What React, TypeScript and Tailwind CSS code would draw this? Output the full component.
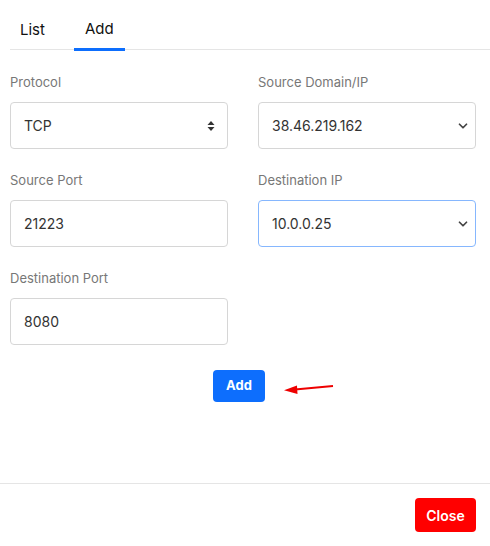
import { ChevronDown } from "lucide-react";

const font = { fontFamily: "Inter, 'Noto Sans', sans-serif" };

function Field({ label, children }: { label: string; children: React.ReactNode }) {
  return (
    <div className="flex flex-col">
      <label className="text-[13px] text-[#777] mb-[10px] leading-5">{label}</label>
      {children}
    </div>
  );
}

function TextBox({ value }: { value: string }) {
  return (
    <div className="h-[47px] rounded-[4px] border border-[#d6d6d6] bg-white px-[13px] flex items-center text-[14px] text-[#333]">
      {value}
    </div>
  );
}

function SelectBox({ value, focused, stepper }: { value: string; focused?: boolean; stepper?: boolean }) {
  return (
    <div
      className={`h-[47px] rounded-[4px] border bg-white pl-[13px] pr-[5px] flex items-center justify-between text-[14px] text-[#333] ${
        focused ? "border-[#86b7fe]" : "border-[#d6d6d6]"
      }`}
    >
      <span>{value}</span>
      {stepper ? (
        <svg width="10" height="12" viewBox="0 0 10 12" className="mr-[6px]">
          <path d="M5 1 L8.5 5 H1.5 Z" fill="#333" />
          <path d="M5 11 L8.5 7 H1.5 Z" fill="#333" />
        </svg>
      ) : (
        <ChevronDown size={14} strokeWidth={3} className="text-[#444]" />
      )}
    </div>
  );
}

export default function App() {
  return (
    <div className="w-[490px] h-[546px] bg-white flex flex-col" style={font}>
      <div className="flex-1 pl-[10px] pr-[14px]">
        <div className="flex border-b border-[#e5e5e5] h-[50px] mr-[-14px]">
          <div className="px-[10px] flex items-end text-[15px] text-[#111] pb-[8px]">List</div>
          <div className="ml-[19px] px-[11px] flex items-end text-[15px] text-[#111] pb-[8px] border-b-[3px] border-[#0d6efd] mb-[-2px]">
            Add
          </div>
        </div>

        <div className="grid grid-cols-2 gap-x-[30px] gap-y-[21px] mt-[22px]">
          <Field label="Protocol">
            <SelectBox value="TCP" stepper />
          </Field>
          <Field label="Source Domain/IP">
            <SelectBox value="38.46.219.162" />
          </Field>
          <Field label="Source Port">
            <TextBox value="21223" />
          </Field>
          <Field label="Destination IP">
            <SelectBox value="10.0.0.25" focused />
          </Field>
          <Field label="Destination Port">
            <TextBox value="8080" />
          </Field>
        </div>

        <div className="flex justify-center items-center mt-[25px] pr-[8px]">
          <div className="relative">
            <button className="h-[32px] w-[52px] rounded-[4px] bg-[#0d6efd] text-white text-[13px] font-bold">
              Add
            </button>
            <svg width="52" height="14" viewBox="0 0 52 14" className="absolute left-[70px] top-[13px]">
              <path d="M50 3 L12 6.5" stroke="#e00" strokeWidth="2" />
              <path d="M1 7.2 L14 2.5 L14.5 11 Z" fill="#e00" />
            </svg>
          </div>
        </div>
      </div>

      <div className="border-t border-[#e5e5e5] h-[63px] flex items-center justify-end pr-[14px]">
        <button className="h-[34px] w-[61px] rounded-[4px] bg-[#ff0000] text-white text-[14px] font-semibold">
          Close
        </button>
      </div>
    </div>
  );
}
